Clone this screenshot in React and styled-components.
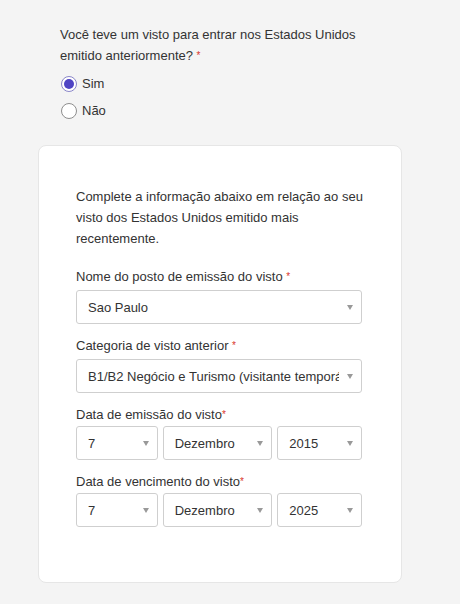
import styled, { createGlobalStyle } from 'styled-components';

const GlobalStyle = createGlobalStyle`
  body {
    margin: 0;
    background: #f4f4f4;
    font-family: "Liberation Sans", Arial, sans-serif;
    color: #333;
  }
`;

const Page = styled.div`
  padding: 24px 58px 22px 38px;
`;

const Question = styled.div`
  padding-left: 22px;
  margin-bottom: 21px;
`;

const QuestionText = styled.p`
  margin: 0 0 4px;
  font-size: 13px;
  line-height: 21px;
  width: 300px;
`;

const Req = styled.span`
  color: #d9352b;
  font-size: 10px;
  vertical-align: top;
`;

const RadioRow = styled.label`
  display: flex;
  align-items: center;
  gap: 5px;
  height: 27px;
  font-size: 13px;
  padding-left: 1px;
`;

const RadioDot = styled.span`
  width: 16px;
  height: 16px;
  box-sizing: border-box;
  border-radius: 50%;
  border: 1px solid ${p => (p.$checked ? '#8a86c9' : '#8e8e8e')};
  background: #fff;
  display: flex;
  align-items: center;
  justify-content: center;
  &::after {
    content: '';
    width: 10px;
    height: 10px;
    border-radius: 50%;
    background: ${p => (p.$checked ? '#4f44c4' : 'transparent')};
  }
`;

const Card = styled.div`
  background: #fff;
  border: 1px solid #e6e6e6;
  border-radius: 8px;
  padding: 40px 39px 55px 37px;
  display: flex;
  flex-direction: column;
`;

const Intro = styled.p`
  margin: 0 0 19px;
  font-size: 13px;
  line-height: 21px;
  width: 300px;
`;

const Field = styled.div`
  margin-bottom: ${p => p.$mb || '13px'};
`;

const Label = styled.div`
  font-size: 13px;
  line-height: 18px;
  margin-bottom: ${p => (p.$tight ? '2px' : '4px')};
`;

const Row = styled.div`
  display: flex;
  gap: 5px;
`;

const Select = styled.div`
  width: ${p => p.$w || '100%'};
  box-sizing: border-box;
  height: 34px;
  border: 1px solid #cfcfcf;
  border-radius: 3px;
  background: #fff;
  display: flex;
  align-items: center;
  padding: 0 8px 0 11px;
  font-size: 13px;
  color: #333;
  overflow: hidden;
`;

const SelectText = styled.span`
  flex: 1;
  white-space: nowrap;
  overflow: hidden;
`;

const Caret = styled.span`
  width: 0;
  height: 0;
  border-left: 3.5px solid transparent;
  border-right: 3.5px solid transparent;
  border-top: 5px solid #999;
  margin-left: 8px;
  flex-shrink: 0;
`;

const Dropdown = ({ value, w }) => (
  <Select $w={w}>
    <SelectText>{value}</SelectText>
    <Caret />
  </Select>
);

const DateRow = ({ day, month, year }) => (
  <Row>
    <Dropdown value={day} w="82px" />
    <Dropdown value={month} w="110px" />
    <Dropdown value={year} w="85px" />
  </Row>
);

export default function App() {
  return (
    <Page>
      <GlobalStyle />
      <Question>
        <QuestionText>
          Você teve um visto para entrar nos Estados Unidos emitido anteriormente? <Req>*</Req>
        </QuestionText>
        <RadioRow>
          <RadioDot $checked />
          Sim
        </RadioRow>
        <RadioRow>
          <RadioDot />
          Não
        </RadioRow>
      </Question>
      <Card>
        <Intro>
          Complete a informação abaixo em relação ao seu visto dos Estados Unidos emitido mais recentemente.
        </Intro>
        <Field>
          <Label>Nome do posto de emissão do visto <Req>*</Req></Label>
          <Dropdown value="Sao Paulo" />
        </Field>
        <Field>
          <Label>Categoria de visto anterior <Req>*</Req></Label>
          <Dropdown value="B1/B2 Negócio e Turismo (visitante temporário)" />
        </Field>
        <Field>
          <Label $tight>Data de emissão do visto<Req>*</Req></Label>
          <DateRow day="7" month="Dezembro" year="2015" />
        </Field>
        <Field $mb="0">
          <Label $tight>Data de vencimento do visto<Req>*</Req></Label>
          <DateRow day="7" month="Dezembro" year="2025" />
        </Field>
      </Card>
    </Page>
  );
}
